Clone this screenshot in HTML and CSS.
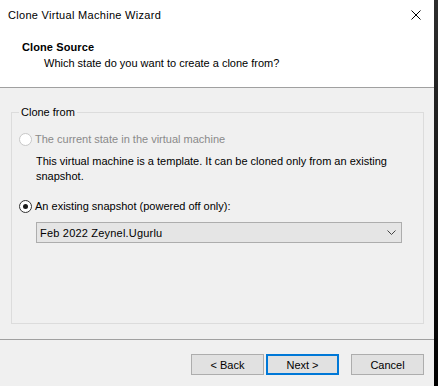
FILE: index.html
```
<!DOCTYPE html>
<html>
<head>
<meta charset="utf-8">
<link rel="stylesheet" href="styles.css">
</head>
<body>
<div class="screen">
  <div class="dialog">
    <div class="top">
      <div class="titlebar">
        <span class="title">Clone Virtual Machine Wizard</span>
        <svg class="close" width="10" height="10" viewBox="0 0 10 10"><path d="M0.5 0.5 L9.5 9.5 M9.5 0.5 L0.5 9.5" stroke="#000" stroke-width="1" fill="none"/></svg>
      </div>
      <div class="header">
        <div class="h-title">Clone Source</div>
        <div class="h-sub">Which state do you want to create a clone from?</div>
      </div>
    </div>
    <div class="body">
      <div class="group">
        <span class="legend">Clone from</span>
        <div class="radio disabled"><span class="dot"></span><span>The current state in the virtual machine</span></div>
        <div class="note">This virtual machine is a template. It can be cloned only from an existing snapshot.</div>
        <div class="radio checked"><span class="dot"></span><span>An existing snapshot (powered off only):</span></div>
        <div class="combo">
          <span>Feb 2022 Zeynel.Ugurlu</span>
          <svg width="9" height="5" viewBox="0 0 9 5"><path d="M0.5 0.5 L4.5 4.5 L8.5 0.5" stroke="#444" stroke-width="1" fill="none"/></svg>
        </div>
      </div>
    </div>
    <div class="footer">
      <button class="btn">&lt; Back</button>
      <button class="btn primary">Next &gt;</button>
      <button class="btn cancel">Cancel</button>
    </div>
  </div>
  <div class="edge"></div>
</div>
</body>
</html>
```
FILE: styles.css
```
html, body {
  margin: 0;
  padding: 0;
  width: 438px;
  height: 386px;
  overflow: hidden;
}
body {
  font-family: "Liberation Sans", Arial, sans-serif;
  font-size: 11px;
  color: #000;
}
.screen {
  display: flex;
  width: 438px;
  height: 386px;
}
.dialog {
  width: 434px;
  height: 386px;
  display: flex;
  flex-direction: column;
  background: #f0f0f0;
}
.edge {
  width: 4px;
  height: 386px;
  background: linear-gradient(#2e2e2e, #000);
}
.top {
  background: #fff;
  height: 87px;
  border-bottom: 1px solid #a0a0a0;
}
.titlebar {
  height: 30px;
  display: flex;
  align-items: center;
  justify-content: space-between;
  padding: 0 13px 0 8px;
}
.title {
  line-height: 16px;
  letter-spacing: 0.3px;
}
.close {
  display: block;
}
.header {
  padding: 9px 0 0 22px;
}
.h-title {
  font-weight: bold;
  line-height: 16px;
  letter-spacing: 0.1px;
}
.h-sub {
  padding-left: 22px;
  line-height: 16px;
}
.body {
  padding: 24px 10px 0 11px;
  height: 251px;
  box-sizing: border-box;
}
.group {
  position: relative;
  border: 1px solid #dcdcdc;
  height: 212px;
  box-sizing: border-box;
  padding: 18px 8px 0 7px;
}
.legend {
  position: absolute;
  left: 7px;
  top: -9px;
  padding: 0 2px;
  background: #f0f0f0;
  line-height: 16px;
}
.radio {
  display: flex;
  align-items: center;
  gap: 3px;
  line-height: 16px;
}
.radio .dot {
  width: 11px;
  height: 11px;
  border-radius: 50%;
  border: 1px solid #333;
  background: #fff;
  position: relative;
  flex: none;
}
.radio.disabled {
  color: #8a8a8a;
}
.radio.disabled .dot {
  border-color: #c8c8c8;
}
.radio.checked .dot::after {
  content: "";
  position: absolute;
  left: 3px;
  top: 3px;
  width: 5px;
  height: 5px;
  border-radius: 50%;
  background: #1a1a1a;
}
.note {
  margin: 7px 12px 14px 17px;
  line-height: 15px;
}
.combo {
  margin: 8px 13px 0 17px;
  height: 21px;
  box-sizing: border-box;
  border: 1px solid #adadad;
  background: #e5e5e5;
  display: flex;
  align-items: center;
  justify-content: space-between;
  padding: 0 4px 0 3px;
  letter-spacing: 0.2px;
}
.combo svg {
  display: block;
  margin-right: 1px;
}
.footer {
  border-top: 1px solid #a0a0a0;
  box-sizing: border-box;
  height: 47px;
  display: flex;
  align-items: flex-start;
  padding: 14px 10px 0 0;
  justify-content: flex-end;
  gap: 2px;
}
.btn {
  font-family: inherit;
  font-size: 11px;
  width: 73px;
  height: 21px;
  box-sizing: border-box;
  border: 1px solid #adadad;
  background: #e1e1e1;
  color: #000;
  padding: 0;
  margin: 0;
}
.btn.primary {
  border: 2px solid #0078d7;
}
.btn.cancel {
  margin-left: 10px;
}
```
